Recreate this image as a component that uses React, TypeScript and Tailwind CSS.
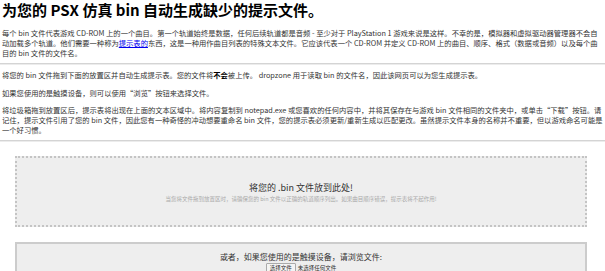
import React from "react";

const font = { fontFamily: '"Noto Sans CJK SC", "Open Sans", sans-serif' };

export default function App() {
  return (
    <div className="w-[605px] h-[271px] overflow-hidden bg-white text-[#333]" style={font}>
      <div className="pl-[2px]">
        <h1 className="text-[15px] leading-[20px] font-bold text-black whitespace-nowrap">
          为您的 PSX 仿真 bin 自动生成缺少的提示文件。
        </h1>
        <div className="mt-[8px] text-[7.3px] leading-[10px] whitespace-nowrap">
          <div>每个 bin 文件代表游戏 CD-ROM 上的一个曲目。第一个轨道始终是数据，任何后续轨道都是音频 - 至少对于 PlayStation 1 游戏来说是这样。不幸的是，模拟器和虚拟驱动器管理器不会自</div>
          <div>
            动加载多个轨道。他们需要一种称为<a className="text-[#0000ee] underline">提示表的</a>东西，这是一种用作曲目列表的特殊文本文件。它应该代表一个 CD-ROM 并定义 CD-ROM 上的曲目、顺序、格式（数据或音频）以及每个曲
          </div>
          <div>目的 bin 文件的文件名。</div>
        </div>
      </div>
      <div className="mt-[5px] h-[2px] border-t border-[#d4d4d4] border-b border-b-[#ececec]" />
      <div className="pl-[2px] text-[7.3px] leading-[10px] whitespace-nowrap">
        <div className="mt-[5px]">
          将您的 bin 文件拖到下面的放置区并自动生成提示表。您的文件将<b className="text-black">不会</b>被上传。 dropzone 用于读取 bin 的文件名，因此该网页可以为您生成提示表。
        </div>
        <div className="mt-[8px]">如果您使用的是触摸设备，则可以使用“浏览”按钮来选择文件。</div>
        <div className="mt-[7px]">
          <div>将垃圾箱拖到放置区后，提示表将出现在上面的文本区域中。将内容复制到 notepad.exe 或您喜欢的任何内容中，并将其保存在与游戏 bin 文件相同的文件夹中，或单击“下载”按钮。请</div>
          <div>记住，提示文件引用了您的 bin 文件，因此您有一种奇怪的冲动想要重命名 bin 文件，您的提示表必须更新/重新生成以匹配更改。虽然提示文件本身的名称并不重要，但以游戏命名可能是</div>
          <div>一个好习惯。</div>
        </div>
      </div>
      <div className="mt-[5px] h-[2px] border-t border-[#d4d4d4] border-b border-b-[#ececec]" />
      <div className="ml-[15px] mr-[18px] mt-[14px] h-[71px] bg-[#eeeeee] border-2 border-dotted border-[#c4c4c4] flex flex-col items-center justify-center">
        <div className="mt-[2px] text-[9px] leading-[12px] text-[#333]">将您的 .bin 文件放到此处!</div>
        <div className="mt-[1px] text-[5.5px] leading-[8px] text-[#aaa] whitespace-nowrap">
          当您将文件拖到放置区时，请确保您的 bin 文件以正确的轨道顺序列出。如果曲目顺序错误，提示表将不起作用!
        </div>
      </div>
      <div className="ml-[15px] mr-[18px] mt-[15px] h-[60px] bg-[#eeeeee] border-2 border-[#cccccc] flex flex-col items-center pt-[7px]">
        <div className="text-[8px] leading-[11px] text-[#333]">或者，如果您使用的是触摸设备，请浏览文件:</div>
        <div className="mt-[1px] flex items-center text-[5.5px] leading-[8px] text-[#333]">
          <span className="px-[3px] h-[10px] flex items-center bg-[#f4f4f4] border border-[#aaa] rounded-[1px]">选择文件</span>
          <span className="ml-[2px]">未选择任何文件</span>
        </div>
      </div>
    </div>
  );
}
